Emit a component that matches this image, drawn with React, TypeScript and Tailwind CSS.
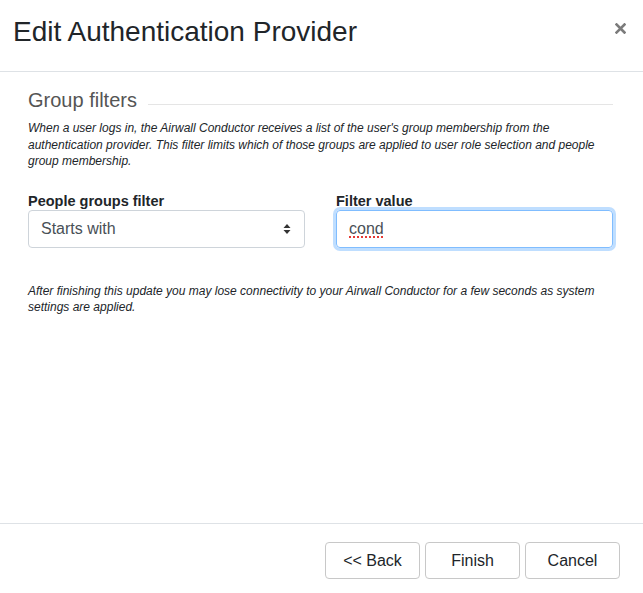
import React from "react";

export default function App() {
  return (
    <div className="w-[643px] h-[593px] bg-white flex flex-col text-[#212529] font-['Liberation_Sans',Arial,sans-serif]">
      {/* Header */}
      <div className="h-[72px] border-b border-[#dee2e6] flex items-start justify-between pl-[13px] pr-[17px] pt-[18px] shrink-0">
        <h1 className="text-[28px] leading-[28px] font-normal">Edit Authentication Provider</h1>
        <button className="mt-[5px] w-[11px] h-[11px] flex items-center justify-center" aria-label="Close">
          <svg width="11" height="11" viewBox="0 0 11 11">
            <path d="M1.5 1.5 L9.5 9.5 M9.5 1.5 L1.5 9.5" stroke="#7b7b7b" strokeWidth="2.6" strokeLinecap="square" />
          </svg>
        </button>
      </div>

      {/* Body */}
      <div className="flex-1 pl-[28px] pr-[30px] pt-[16px]">
        <div className="flex items-start gap-[11px]">
          <div className="text-[20px] leading-[24px] text-[#555]">Group filters</div>
          <div className="flex-1 h-px bg-[#e5e5e5] mt-[16px]" />
        </div>
        <p className="mt-[8px] text-[12px] leading-[16.5px] italic text-[#212529]">
          When a user logs in, the Airwall Conductor receives a list of the user's group membership from the
          authentication provider. This filter limits which of those groups are applied to user role selection and people
          group membership.
        </p>

        <div className="mt-[23px] grid grid-cols-2 gap-[31px]">
          <div className="flex flex-col">
            <label className="text-[14.5px] leading-[17px] font-bold">People groups filter</label>
            <div className="h-[38px] border border-[#ced4da] rounded-[4px] flex items-center justify-between pl-[12px] pr-[13px] text-[16px] text-[#495057]">
              <span>Starts with</span>
              <svg width="8" height="12" viewBox="0 0 8 12">
                <path d="M4 1 L7.5 5 L0.5 5 Z M4 11 L7.5 7 L0.5 7 Z" fill="#333" />
              </svg>
            </div>
          </div>
          <div className="flex flex-col">
            <label className="text-[14.5px] leading-[17px] font-bold">Filter value</label>
            <div className="h-[38px] border border-[#80bdff] rounded-[4px] shadow-[0_0_0_3px_rgba(0,123,255,0.25)] flex items-center pl-[12px] text-[16px] text-[#495057]">
              <span className="underline decoration-dotted decoration-[#e53935] decoration-2 underline-offset-[3px]">cond</span>
            </div>
          </div>
        </div>

        <p className="mt-[35px] text-[12px] leading-[16.5px] italic text-[#212529]">
          After finishing this update you may lose connectivity to your Airwall Conductor for a few seconds as system
          settings are applied.
        </p>
      </div>

      {/* Footer */}
      <div className="h-[70px] border-t border-[#dee2e6] flex items-start justify-end gap-[5px] pr-[23px] pt-[18px] shrink-0">
        <button className="w-[95px] h-[37px] border border-[#c8c8c8] rounded-[4px] bg-white text-[16px] text-[#212529]">&lt;&lt; Back</button>
        <button className="w-[95px] h-[37px] border border-[#c8c8c8] rounded-[4px] bg-white text-[16px] text-[#212529]">Finish</button>
        <button className="w-[95px] h-[37px] border border-[#c8c8c8] rounded-[4px] bg-white text-[16px] text-[#212529]">Cancel</button>
      </div>
    </div>
  );
}
